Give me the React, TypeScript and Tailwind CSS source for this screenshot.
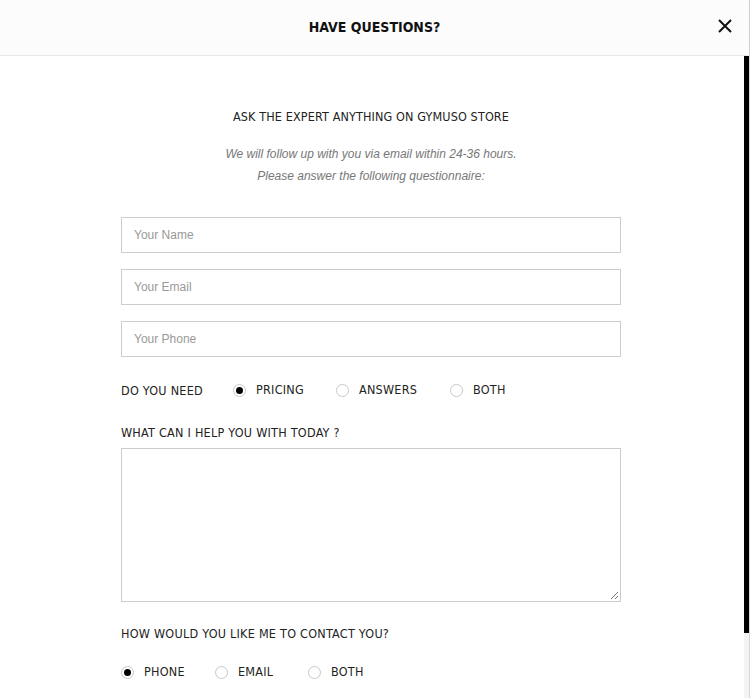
import React from "react";

const head = { fontFamily: "'DejaVu Sans Condensed', 'DejaVu Sans', sans-serif" };
const arial = { fontFamily: "'Liberation Sans', Arial, sans-serif" };

function Radio({ checked, label, className = "" }: { checked?: boolean; label: string; className?: string }) {
  return (
    <label className={"flex items-center " + className}>
      <span className="w-[13px] h-[13px] rounded-full border border-[#c8c8c8] bg-white flex items-center justify-center">
        {checked && <span className="w-[7px] h-[7px] rounded-full bg-black" />}
      </span>
      <span className="ml-[10px] text-[12.5px] tracking-[0.02em] text-[#222]" style={head}>{label}</span>
    </label>
  );
}

function Field({ placeholder }: { placeholder: string }) {
  return (
    <div className="h-[36px] border border-[#cccccc] flex items-center px-[12px] text-[12px] text-[#999]" style={arial}>
      {placeholder}
    </div>
  );
}

export default function App() {
  return (
    <div className="w-[750px] h-[698px] bg-white flex flex-col overflow-hidden">
      <div className="h-[56px] shrink-0 bg-[#fcfcfc] border-b border-[#e8e8e8] flex items-center justify-center relative border-r border-r-[#d0d0d0]">
        <span className="text-[14px] font-bold text-[#111]" style={head}>HAVE QUESTIONS?</span>
        <button className="absolute right-[16px] top-[18px] w-[16px] h-[16px] flex items-center justify-center">
          <svg width="14" height="14" viewBox="0 0 14 14">
            <path d="M1 1 L13 13 M13 1 L1 13" stroke="#111" strokeWidth="2" />
          </svg>
        </button>
      </div>
      <div className="flex-1 flex min-h-0">
        <div className="flex-1 flex flex-col items-center pt-[52px] pr-[2px]">
          <div className="text-[12.5px] tracking-[0.01em] text-[#222]" style={head}>ASK THE EXPERT ANYTHING ON GYMUSO STORE</div>
          <div className="mt-[16px] text-[12px] italic text-[#777] leading-[22px] text-center" style={arial}>
            <div>We will follow up with you via email within 24-36 hours.</div>
            <div>Please answer the following questionnaire:</div>
          </div>
          <div className="w-[500px] mt-[30px] flex flex-col gap-[16px]">
            <Field placeholder="Your Name" />
            <Field placeholder="Your Email" />
            <Field placeholder="Your Phone" />
          </div>
          <div className="w-[500px] mt-[23px] flex items-center">
            <span className="w-[112px] text-[12.5px] tracking-[0.02em] text-[#222] mt-[2px]" style={head}>DO YOU NEED</span>
            <Radio checked label="PRICING" className="w-[103px]" />
            <Radio label="ANSWERS" className="w-[114px]" />
            <Radio label="BOTH" />
          </div>
          <div className="w-[500px] mt-[23px] text-[12.5px] tracking-[0.02em] text-[#222]" style={head}>WHAT CAN I HELP YOU WITH TODAY ?</div>
          <div className="w-[500px] h-[154px] mt-[6px] border border-[#cccccc] relative">
            <svg className="absolute right-[1px] bottom-[1px]" width="9" height="9" viewBox="0 0 9 9">
              <path d="M8 1 L1 8 M8 5 L5 8" stroke="#777" strokeWidth="1" />
            </svg>
          </div>
          <div className="w-[500px] mt-[23px] text-[12.5px] tracking-[0.02em] text-[#222]" style={head}>HOW WOULD YOU LIKE ME TO CONTACT YOU?</div>
          <div className="w-[500px] mt-[19px] flex items-center">
            <Radio checked label="PHONE" className="w-[94px]" />
            <Radio label="EMAIL" className="w-[93px]" />
            <Radio label="BOTH" />
          </div>
        </div>
        <div className="w-[6px] flex flex-col border-r border-[#d8d8d8]">
          <div className="h-[577px] bg-black w-[5px]" />
          <div className="flex-1 bg-[#f4f4f4]" />
        </div>
      </div>
    </div>
  );
}
